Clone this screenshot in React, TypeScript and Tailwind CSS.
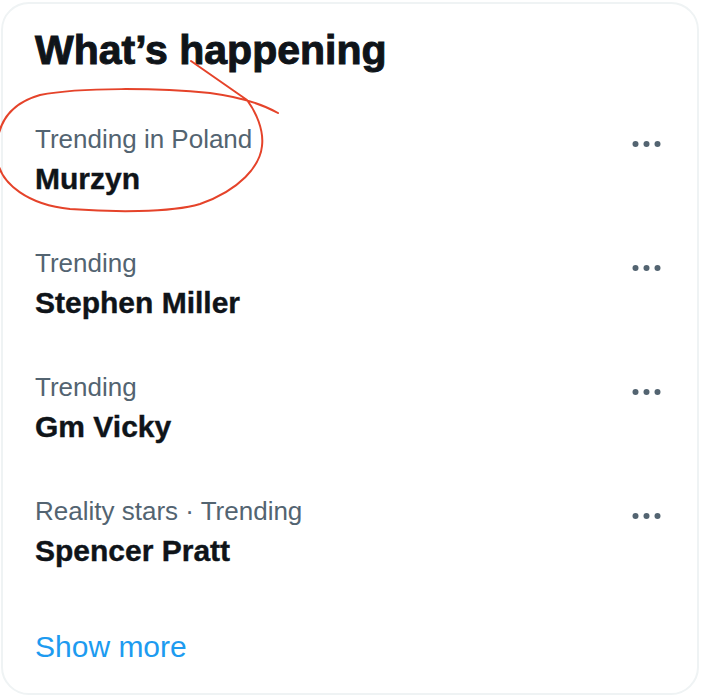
interface Trend {
    context: string;
    name: string;
}

const trends: Trend[] = [
    { context: 'Trending in Poland', name: 'Murzyn' },
    { context: 'Trending', name: 'Stephen Miller' },
    { context: 'Trending', name: 'Gm Vicky' },
    { context: 'Reality stars · Trending', name: 'Spencer Pratt' },
];

function Dots() {
    return (
        <svg width="30" height="8" viewBox="0 0 30 8" className="text-[#536471]">
            <circle cx="3.5" cy="4" r="3" fill="currentColor" />
            <circle cx="14.5" cy="4" r="3" fill="currentColor" />
            <circle cx="25.5" cy="4" r="3" fill="currentColor" />
        </svg>
    );
}

function TrendRow({ trend }: { trend: Trend }) {
    return (
        <div className="flex justify-between px-[32px] py-[24px]">
            <div className="flex flex-col">
                <span className="text-[26px] leading-[32px] text-[#536471]">{trend.context}</span>
                <span className="mt-[4px] text-[30px] leading-[40px] font-bold text-[#0f1419] [-webkit-text-stroke:0.4px_#0f1419]">
                    {trend.name}
                </span>
            </div>
            <div className="w-[36px] h-[42px] flex items-center justify-center">
                <Dots />
            </div>
        </div>
    );
}

export default function App() {
    return (
        <div
            className="relative w-[702px] h-[696px] overflow-hidden bg-white"
            style={{ fontFamily: '"Liberation Sans", Arial, sans-serif' }}
        >
            {/* Card */}
            <div className="ml-[1px] mt-[2px] w-[698px] h-[693px] rounded-[28px] border-2 border-[#eff3f4] bg-white">
                {/* Header */}
                <div className="px-[32px] pt-[22px] pb-[25px]">
                    <h2 className="text-[41px] leading-[48px] font-bold text-[#0f1419] [-webkit-text-stroke:1px_#0f1419]">
                        What’s happening
                    </h2>
                </div>

                {/* Trends */}
                {trends.map((t) => (
                    <TrendRow key={t.name} trend={t} />
                ))}

                {/* Footer */}
                <div className="px-[32px] py-[32px]">
                    <span className="text-[30px] leading-[40px] text-[#1d9bf0]">Show more</span>
                </div>
            </div>

            {/* Red pen annotation */}
            <svg
                className="absolute left-0 top-0 pointer-events-none"
                width="702"
                height="696"
                viewBox="0 0 702 696"
                fill="none"
            >
                <path
                    d="M191 61 L247 100 C256 112, 264 130, 262 146 C260 166, 240 190, 200 204 C170 213, 110 212, 70 209 C30 205, 0 185, -3 158 C-5 130, 5 105, 40 95 C80 87, 160 88, 210 93 C240 97, 262 104, 278 113"
                    stroke="#e5432a"
                    strokeWidth="2"
                    strokeLinecap="round"
                    strokeLinejoin="round"
                />
            </svg>
        </div>
    );
}
